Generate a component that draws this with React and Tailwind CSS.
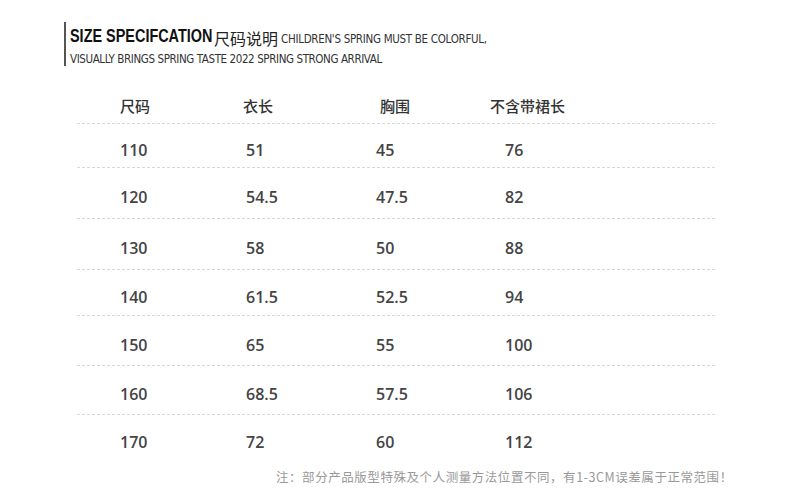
const rows = [
  { v: ['110', '51', '45', '76'], h: 'h-[44px]' },
  { v: ['120', '54.5', '47.5', '82'], h: 'h-[51px]' },
  { v: ['130', '58', '50', '88'], h: 'h-[51px]' },
  { v: ['140', '61.5', '52.5', '94'], h: 'h-[46px]' },
  { v: ['150', '65', '55', '100'], h: 'h-[50px]' },
  { v: ['160', '68.5', '57.5', '106'], h: 'h-[49px]' },
  { v: ['170', '72', '60', '112'], h: 'h-[46px]' },
]

export default function App() {
  return (
    <div className="w-[790px] h-[493px] bg-white overflow-hidden relative">
      {/* title block */}
      <div className="mt-[22px] ml-[64px] h-[44px] border-l-2 border-[#555] pl-[4px] pt-[5px]">
        <div className="flex items-end leading-none">
          <span className="inline-block w-[144px] whitespace-nowrap">
            <span className="inline-block origin-left scale-x-[0.78] font-['Liberation_Sans'] text-[18.5px] font-bold text-[#111]">
              SIZE SPECIFCATION
            </span>
          </span>
          <span className="font-['Noto_Sans_CJK_SC'] text-[16px] text-[#222]">尺码说明</span>
          <span className="ml-[3px] font-['DejaVu_Sans'] font-stretch-condensed text-[11.5px] text-[#333] tracking-[-0.3px]">
            CHILDREN'S SPRING MUST BE COLORFUL,
          </span>
        </div>
        <div className="mt-[8px] font-['DejaVu_Sans'] font-stretch-condensed text-[11.5px] leading-none text-[#333] tracking-[-0.4px]">
          VISUALLY BRINGS SPRING TASTE 2022 SPRING STRONG ARRIVAL
        </div>
      </div>

      {/* table */}
      <div className="ml-[77px] mt-[23px] w-[638px]">
        <div className="grid grid-cols-[123px_137px_110px_1fr] pl-[43px] h-[35px] items-center border-b border-dashed border-[#d8d8d8] font-['Noto_Sans_CJK_SC'] text-[15px] font-medium text-[#333]">
          <span>尺码</span>
          <span>衣长</span>
          <span>胸围</span>
          <span>不含带裙长</span>
        </div>
        {rows.map((r, i) => (
          <div
            key={r.v[0]}
            className={`grid grid-cols-[126px_130px_129px_1fr] pl-[43px] pt-[8px] ${r.h} items-center font-['Open_Sans'] text-[16px] font-semibold text-[#444] ${i < 6 ? 'border-b border-dashed border-[#d8d8d8]' : ''}`}
          >
            {r.v.map((v, j) => (
              <span key={j}>{v}</span>
            ))}
          </div>
        ))}
      </div>

      <div className="absolute left-[276px] top-[468px] font-['Noto_Sans_CJK_SC'] text-[12.5px] text-[#999] tracking-[0.55px]">
        注：部分产品版型特殊及个人测量方法位置不同，有1-3CM误差属于正常范围！
      </div>
    </div>
  )
}
